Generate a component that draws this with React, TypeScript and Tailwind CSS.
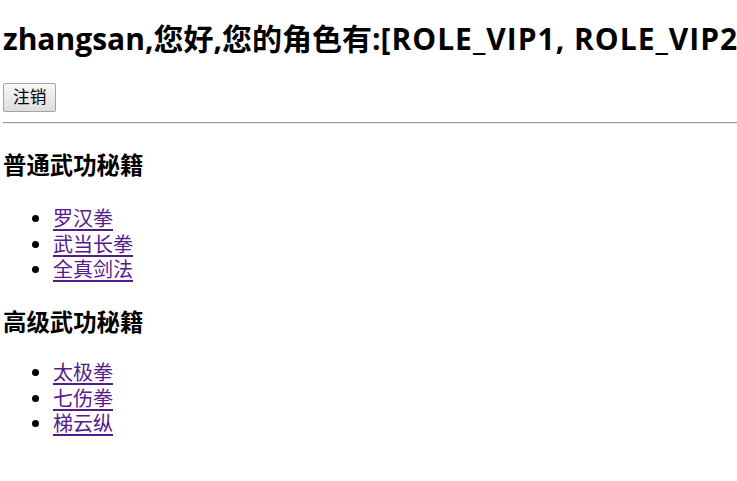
import React from "react";

const font = { fontFamily: '"Open Sans", "Noto Sans CJK SC", sans-serif' };

function Item({ label }: { label: string }) {
  return (
    <li className="flex items-center h-[25.5px] leading-[25.5px]">
      <span className="ml-[29px] w-[7px] h-[7px] rounded-full bg-black shrink-0" />
      <a href="#" className="ml-[14px] text-[#551a8b] underline underline-offset-[3px] text-[20px]">
        {label}
      </a>
    </li>
  );
}

export default function App() {
  const common = ["罗汉拳", "武当长拳", "全真剑法"];
  const advanced = ["太极拳", "七伤拳", "梯云纵"];
  return (
    <div
      className="w-[737px] h-[481px] overflow-hidden bg-white text-black pl-[3px] flex flex-col"
      style={font}
    >
      <h2 className="mt-[19px] h-[40px] leading-[40px] text-[30px] font-bold whitespace-nowrap">
        zhangsan,您好,您的角色有:<span className="tracking-[1px]">[ROLE_VIP1, ROLE_VIP2]</span>
      </h2>
      <div className="mt-[24px]">
        <button className="h-[29px] px-[9px] border border-[#a3a3a3] rounded-[2px] bg-gradient-to-b from-[#f7f7f7] to-[#dedede] text-[16.67px] leading-none text-black">
          注销
        </button>
      </div>
      <hr className="mt-[10px] border-0 border-t border-b border-t-[#9a9a9a] border-b-[#eeeeee] h-[2px] w-[734px]" />
      <h3 className="mt-[26px] h-[30px] leading-[30px] text-[23.4px] font-bold">普通武功秘籍</h3>
      <ul className="mt-[26px]">
        {common.map((c) => (
          <Item key={c} label={c} />
        ))}
      </ul>
      <h3 className="mt-[24.5px] h-[30px] leading-[30px] text-[23.4px] font-bold">高级武功秘籍</h3>
      <ul className="mt-[23px]">
        {advanced.map((c) => (
          <Item key={c} label={c} />
        ))}
      </ul>
    </div>
  );
}
